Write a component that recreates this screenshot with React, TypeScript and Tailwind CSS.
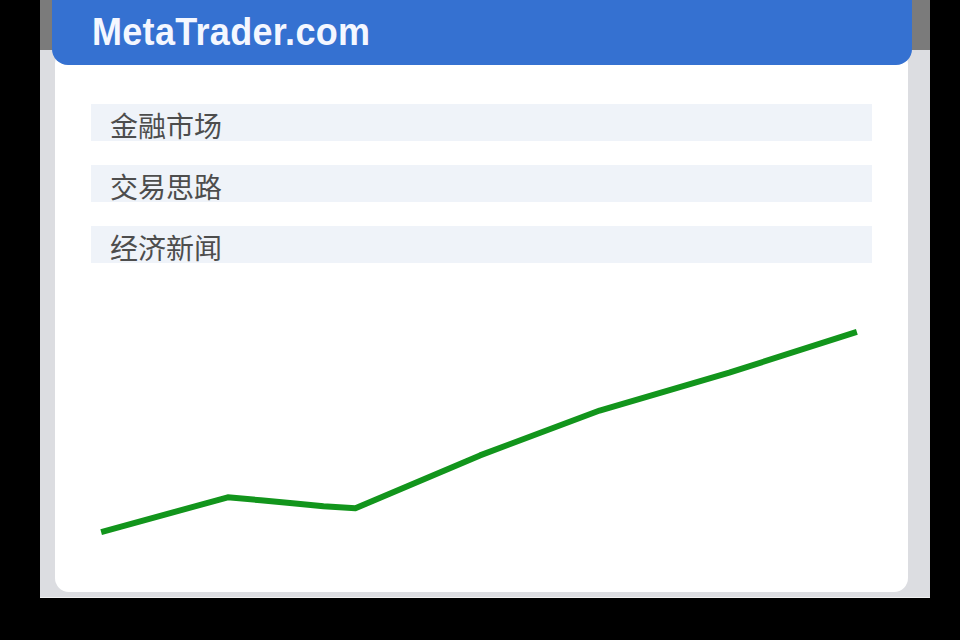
import React from "react";

const pts: [number, number][] = [
  [100, 532],
  [227, 497],
  [260, 500],
  [292, 503],
  [323, 506],
  [355, 508],
  [480, 455],
  [600, 410],
  [730, 372],
  [858, 331],
];

export default function App() {
  const ox = 55;
  const oy = 262;
  const d = pts.map(([x, y]) => `${x - ox},${y - oy}`).join(" ");
  const items = ["金融市场", "交易思路", "经济新闻"];
  return (
    <div className="w-[960px] h-[640px] bg-black overflow-hidden">
      <div className="relative ml-[40px] w-[890px] h-[598px] bg-[linear-gradient(to_bottom,#7b7b7b_0px,#7b7b7b_50px,#dcdde1_50px,#dcdde1_100%)] border-b border-[#f2f2f2] pt-[50px]">
        <div className="ml-[15px] w-[853px] h-[542px] bg-white rounded-[14px] flex flex-col">
          <div className="mt-[54px] ml-[36px] w-[781px] flex flex-col gap-[24px]">
            {items.map((t) => (
              <div
                key={t}
                className="h-[37px] bg-[#eff3f9] pl-[19px] text-[28px] leading-[42px] text-[#4d4d4d]"
                style={{ fontFamily: '"Noto Sans CJK SC", "Noto Sans", sans-serif' }}
              >
                {t}
              </div>
            ))}
          </div>
          <svg width="853" height="330" viewBox="0 0 853 330">
            <polyline
              points={d}
              fill="none"
              stroke="#12951c"
              strokeWidth="6"
              strokeLinejoin="round"
              strokeLinecap="butt"
            />
          </svg>
        </div>
        <div className="absolute top-0 left-[12px] w-[860px] h-[65px] bg-[#3571d1] rounded-b-[16px] flex items-center pl-[40px] pb-[1px]">
          <span
            className="inline-block text-[#f4f7ff] font-bold text-[36px] tracking-[0.3px] leading-none scale-y-[1.08] origin-center"
            style={{ fontFamily: '"Liberation Sans", Arial, sans-serif' }}
          >
            MetaTrader.com
          </span>
        </div>
      </div>
    </div>
  );
}
